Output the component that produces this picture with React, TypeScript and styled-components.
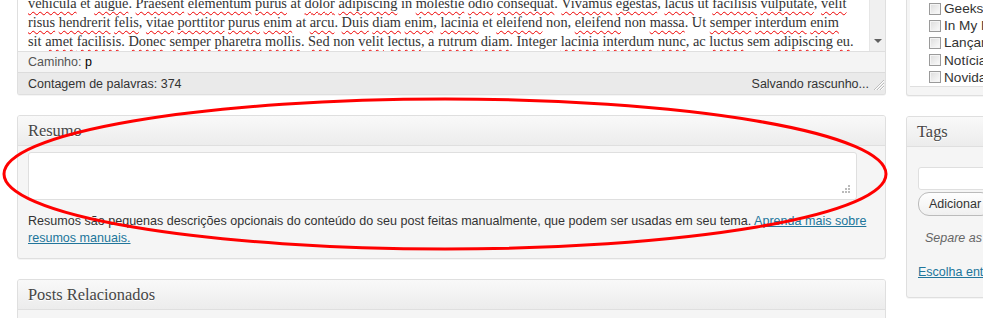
import React from "react";
import styled, { createGlobalStyle } from "styled-components";

const Global = createGlobalStyle`
  html, body { margin: 0; padding: 0; background: #fff; overflow: hidden; }
  body { width: 983px; height: 318px; font-family: "Liberation Sans", Arial, sans-serif; color: #333; }
`;

const Page = styled.div`
  position: relative;
  display: flex;
  align-items: flex-start;
  gap: 20px;
  padding-left: 17px;
  width: 1300px;
  height: 318px;
  overflow: hidden;
`;

const MainCol = styled.div`
  width: 869px;
  flex: none;
  display: flex;
  flex-direction: column;
  gap: 20px;
`;

const SideCol = styled.div`
  width: 280px;
  flex: none;
  display: flex;
  flex-direction: column;
  gap: 20px;
`;

const Box = styled.div<{ $clipTop?: boolean }>`
  box-sizing: border-box;
  border: 1px solid #dfdfdf;
  border-top: ${(p) => (p.$clipTop ? "none" : "1px solid #dfdfdf")};
  border-radius: ${(p) => (p.$clipTop ? "0 0 3px 3px" : "3px")};
  background: #f5f5f5;
  box-shadow: 0 1px 0 rgba(0,0,0,0.04);
  overflow: hidden;
`;

const BoxHeader = styled.h3`
  margin: 0;
  height: 29px;
  line-height: 29px;
  padding: 0 10px;
  font-family: "Liberation Serif", Georgia, serif;
  font-weight: normal;
  font-size: 16.4px;
  color: #464646;
  background: linear-gradient(to bottom, #f9f9f9, #ececec);
  border-bottom: 1px solid #dfdfdf;
  text-shadow: 0 1px 0 #fff;
`;

/* Editor */
const EditorArea = styled.div`
  display: flex;
  height: 51px;
  background: #fff;
`;

const EditorText = styled.div`
  flex: 1;
  display: flex;
  flex-direction: column;
  justify-content: flex-end;
  overflow: hidden;
  padding: 0 0 0 10px;
  font-family: "Liberation Serif", Georgia, serif;
  font-size: 14.35px;
  line-height: 19px;
  color: #333;
`;

const EditorLine = styled.div`
  white-space: nowrap;
`;

const Misspelled = styled.span`
  text-decoration: underline wavy #e00;
  text-decoration-thickness: 1px;
  text-underline-offset: 3px;
`;

const Scrollbar = styled.div`
  width: 16px;
  flex: none;
  background: #f0f0f0;
  border-left: 1px solid #e6e6e6;
  display: flex;
  align-items: flex-end;
  justify-content: center;
  padding-bottom: 8px;
  box-sizing: border-box;
`;

const ArrowDown = styled.span`
  width: 0;
  height: 0;
  border-left: 4px solid transparent;
  border-right: 4px solid transparent;
  border-top: 4px solid #606060;
`;

const PathRow = styled.div`
  height: 20px;
  line-height: 20px;
  padding: 0 10px;
  font-size: 12.5px;
  color: #555;
  background: #f4f4f4;
  border-top: 1px solid #dfdfdf;
  border-bottom: 1px solid #dcdcdc;
`;

const PathTag = styled.span`
  color: #000;
`;

const WordRow = styled.div`
  display: flex;
  align-items: center;
  justify-content: space-between;
  height: 21px;
  padding: 0 0 0 10px;
  font-size: 12.5px;
  color: #333;
  background: #eaeaea;
`;

const Saving = styled.span`
  display: flex;
  align-items: center;
  gap: 2px;
`;

const Grip = styled.svg`
  width: 14px;
  height: 14px;
  align-self: flex-end;
`;

/* Excerpt */
const BoxBody = styled.div`
  padding: 6px 10px 11px;
`;

const TextArea = styled.div`
  position: relative;
  box-sizing: border-box;
  width: 829px;
  height: 48px;
  background: #fff;
  border: 1px solid #dfdfdf;
  border-radius: 3px;
`;

const ResizeDots = styled.svg`
  position: absolute;
  right: 5px;
  bottom: 5px;
  width: 10px;
  height: 10px;
`;

const Help = styled.p`
  margin: 13px 0 0;
  font-size: 12.55px;
  line-height: 17px;
  color: #333;
`;

const Link = styled.a`
  color: #21759b;
  text-decoration: underline;
`;

/* Sidebar */
const CatBody = styled.div`
  padding: 0 0 8px 3px;
`;

const CatList = styled.div`
  height: 86px;
  display: flex;
  flex-direction: column;
  justify-content: flex-end;
  overflow: hidden;
  background: #fff;
  border-bottom: 1px solid #dfdfdf;
  padding-left: 19px;
`;

const CatItem = styled.label`
  display: flex;
  align-items: center;
  gap: 3px;
  height: 19.5px;
  font-size: 13.6px;
  color: #333;
  white-space: nowrap;
`;

const Check = styled.span`
  width: 10px;
  height: 10px;
  flex: none;
  border: 1px solid #9a9a9a;
  background: linear-gradient(to bottom right, #dcdcdc, #fbfbfb);
  box-shadow: inset 0 0 0 1px #f4f4f4;
`;

const TagsBody = styled.div`
  padding: 20px 11px 18px;
  font-size: 12px;
`;

const TagInput = styled.div`
  box-sizing: border-box;
  height: 23px;
  width: 180px;
  background: #fff;
  border: 1px solid #dfdfdf;
  border-radius: 3px;
`;

const Button = styled.button`
  display: block;
  margin-top: 2px;
  height: 24px;
  padding: 0 10px;
  font-family: "Liberation Sans", Arial, sans-serif;
  font-size: 12.5px;
  color: #333;
  background: linear-gradient(to bottom, #fefefe, #f0f0f0);
  border: 1px solid #bbb;
  border-radius: 11px;
`;

const Howto = styled.p`
  margin: 14px 0 0 7px;
  font-style: italic;
  color: #666;
  font-size: 12.5px;
  line-height: 16px;
  white-space: nowrap;
`;

const TagCloudLink = styled(Link)`
  display: block;
  margin-top: 19px;
  font-size: 12.5px;
  white-space: nowrap;
`;

const Overlay = styled.svg`
  position: absolute;
  left: 0;
  top: 0;
  width: 983px;
  height: 318px;
  pointer-events: none;
`;

const lines = [
  "vehicula et augue. Praesent elementum purus at dolor adipiscing in molestie odio consequat. Vivamus egestas, lacus ut facilisis vulputate, velit",
  "risus hendrerit felis, vitae porttitor purus enim at arcu. Duis diam enim, lacinia et eleifend non, eleifend non massa. Ut semper interdum enim",
  "sit amet facilisis. Donec semper pharetra mollis. Sed non velit lectus, a rutrum diam. Integer lacinia interdum nunc, ac luctus sem adipiscing eu.",
];

const okWords = new Set(["et", "in", "at", "ut", "Ut", "a", "ac", "sit", "Integer", "sem", "non"]);

function renderLine(line: string) {
  const tokens = line.split(" ");
  return tokens.map((tok, i) => {
    const m = tok.match(/^([A-Za-zÀ-ú]+)(.*)$/);
    const sep = i < tokens.length - 1 ? " " : "";
    if (!m) return <React.Fragment key={i}>{tok + sep}</React.Fragment>;
    const [, word, punct] = m;
    if (okWords.has(word)) return <React.Fragment key={i}>{tok + sep}</React.Fragment>;
    return (
      <React.Fragment key={i}>
        <Misspelled>{word}</Misspelled>
        {punct + sep}
      </React.Fragment>
    );
  });
}

const categories = ["Geeks", "In My Mind", "Lançamentos", "Notícias", "Novidades"];

export default function App() {
  return (
    <>
      <Global />
      <Page>
        <MainCol>
          <Box $clipTop>
            <EditorArea>
              <EditorText>
                {lines.map((l, i) => (
                  <EditorLine key={i}>{renderLine(l)}</EditorLine>
                ))}
              </EditorText>
              <Scrollbar>
                <ArrowDown />
              </Scrollbar>
            </EditorArea>
            <PathRow>
              Caminho: <PathTag>p</PathTag>
            </PathRow>
            <WordRow>
              <span>Contagem de palavras: 374</span>
              <Saving>
                Salvando rascunho...
                <Grip viewBox="0 0 14 14">
                  <path d="M3 13 L13 3 M6 13 L13 6 M9 13 L13 9" stroke="#bdbdbd" strokeWidth="1" />
                  <path d="M4 13 L13 4 M7 13 L13 7 M10 13 L13 10" stroke="#fff" strokeWidth="1" />
                </Grip>
              </Saving>
            </WordRow>
          </Box>

          <Box>
            <BoxHeader>Resumo</BoxHeader>
            <BoxBody>
              <TextArea>
                <ResizeDots viewBox="0 0 10 10">
                  <rect x="7" y="1" width="2" height="2" fill="#bbb" />
                  <rect x="4" y="4" width="2" height="2" fill="#bbb" />
                  <rect x="7" y="4" width="2" height="2" fill="#bbb" />
                  <rect x="1" y="7" width="2" height="2" fill="#bbb" />
                  <rect x="4" y="7" width="2" height="2" fill="#bbb" />
                  <rect x="7" y="7" width="2" height="2" fill="#bbb" />
                </ResizeDots>
              </TextArea>
              <Help>
                Resumos são pequenas descrições opcionais do conteúdo do seu post feitas manualmente, que podem ser usadas em seu tema.{" "}
                <Link href="#">Aprenda mais sobre resumos manuais.</Link>
              </Help>
            </BoxBody>
          </Box>

          <Box>
            <BoxHeader>Posts Relacionados</BoxHeader>
            <BoxBody style={{ height: 40 }} />
          </Box>
        </MainCol>

        <SideCol>
          <Box $clipTop>
            <CatBody>
              <CatList>
                {categories.map((c) => (
                  <CatItem key={c}>
                    <Check />
                    {c}
                  </CatItem>
                ))}
              </CatList>
            </CatBody>
          </Box>

          <Box>
            <BoxHeader>Tags</BoxHeader>
            <TagsBody>
              <TagInput />
              <Button>Adicionar</Button>
              <Howto>Separe as tags com vírgulas</Howto>
              <TagCloudLink href="#">Escolha entre as tags mais usadas</TagCloudLink>
            </TagsBody>
          </Box>

          <Box>
            <BoxHeader>Formato</BoxHeader>
          </Box>
        </SideCol>

        <Overlay viewBox="0 0 983 318">
          <ellipse cx="445" cy="174" rx="441" ry="75" fill="none" stroke="#f00" strokeWidth="3" />
        </Overlay>
      </Page>
    </>
  );
}
